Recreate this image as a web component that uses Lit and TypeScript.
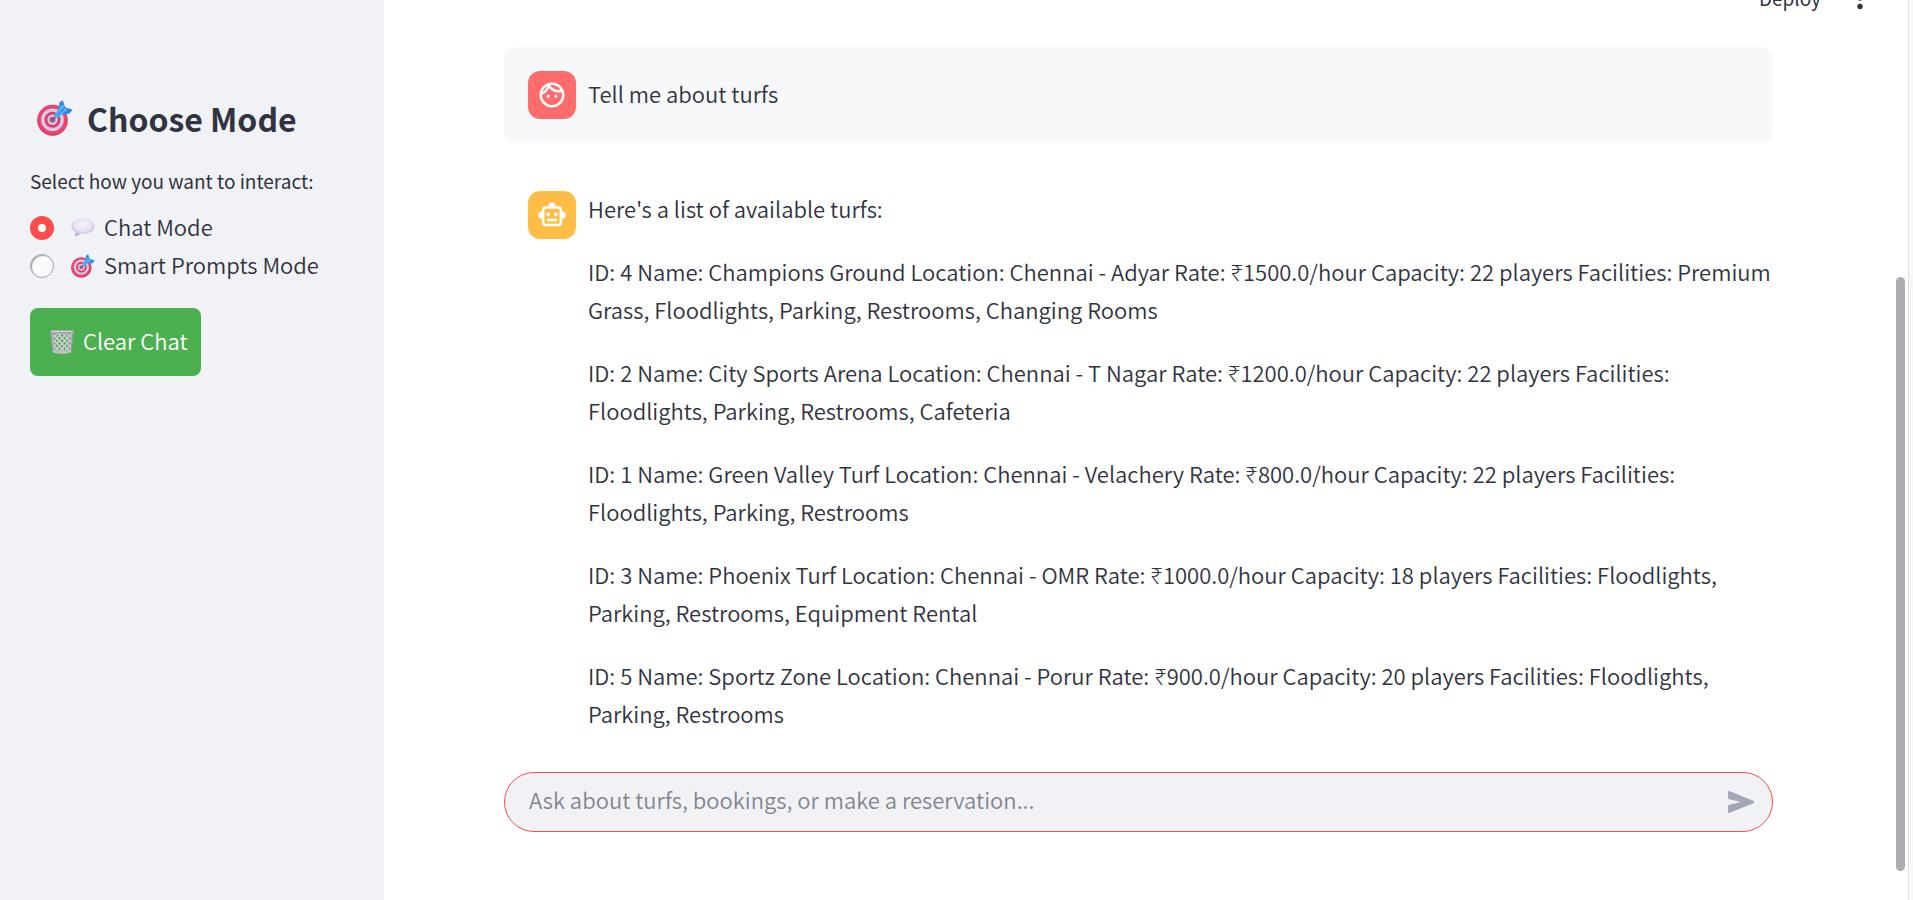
import { LitElement, html, css, svg } from "lit";
import { customElement, state } from "lit/decorators.js";

const turfs = [
  "ID: 4 Name: Champions Ground Location: Chennai - Adyar Rate: ₹1500.0/hour Capacity: 22 players Facilities: Premium Grass, Floodlights, Parking, Restrooms, Changing Rooms",
  "ID: 2 Name: City Sports Arena Location: Chennai - T Nagar Rate: ₹1200.0/hour Capacity: 22 players Facilities: Floodlights, Parking, Restrooms, Cafeteria",
  "ID: 1 Name: Green Valley Turf Location: Chennai - Velachery Rate: ₹800.0/hour Capacity: 22 players Facilities: Floodlights, Parking, Restrooms",
  "ID: 3 Name: Phoenix Turf Location: Chennai - OMR Rate: ₹1000.0/hour Capacity: 18 players Facilities: Floodlights, Parking, Restrooms, Equipment Rental",
  "ID: 5 Name: Sportz Zone Location: Chennai - Porur Rate: ₹900.0/hour Capacity: 20 players Facilities: Floodlights, Parking, Restrooms",
];

const targetArt = svg`
  <circle cx="15.5" cy="20.5" r="15.2" fill="#c92d5c"/>
  <circle cx="15.5" cy="19.8" r="15" fill="#ea4570"/>
  <circle cx="15.5" cy="19.8" r="11.4" fill="#d5c9e3"/>
  <circle cx="15.5" cy="19.8" r="8" fill="#e03a6c"/>
  <circle cx="15.5" cy="19.8" r="5.2" fill="#d8cbe4"/>
  <circle cx="15.5" cy="19.8" r="3" fill="#a45f84"/>
  <path d="M15.2 20.4 20 15" stroke="#6a6579" stroke-width="1.6"/>
  <path d="M21.5 8.500 22.6 2.300 25.8.2 28 7.200 35.6 9.700 32.2 13.800 26 14.600Z" fill="#3287e4"/>
  <path d="M17.2 14.8 24.5 5.2Q26.5 3.6 28 6.8Q31 8 29.8 10.6L20.8 17.8Q18 19 17.2 14.8Z" fill="#4db2f3"/>
  <path d="M20.5 15.2 28 7.2" stroke="#328be4" stroke-width="1.2"/>`;

const bubbleArt = svg`
  <defs><radialGradient id="b" cx=".5" cy=".35" r=".65"><stop offset="0" stop-color="#f7f2fb"/><stop offset=".6" stop-color="#e8dff2"/><stop offset="1" stop-color="#bba9d2"/></radialGradient></defs>
  <path d="M12 2C5.500 2 .5 5.400.5 10Q.5 13.600 4.200 15.900Q5 17.500 3.900 19.300Q4.300 20.600 6 19.800L10.200 17.700C18 18.200 23.500 15.200 23.500 10C23.500 5.300 18.500 2 12 2Z" fill="url(#b)"/>`;

const trashArt = svg`
  <path d="M1 2.500H23L21 22Q12 24.500 3 22Z" fill="#bdb8c4"/>
  <path d="M3.300 4H20.700L19.200 20.500H4.800Z" fill="#58a85d"/>
  <g stroke="#d5d1da" stroke-width="1.300" fill="none">
    <path d="M3.500 5 19 20.500M8 4 20 16M13 4l7.500 7.500M4 10.500l10 10M4.500 16l4.500 4.500M17 4l3 3"/>
    <path d="M20.500 5 5 20.500M16 4 4 16M11 4l-7.500 7.500M20 10.500l-10 10M19.500 16 15 20.500M7 4 4 7"/>
  </g>
  <path d="M1 2.500 3 22M23 2.500 21 22" stroke="#9e99aa" stroke-width="1.200"/>
  <rect x="0" y=".5" width="24" height="3" rx="1.500" fill="#a39ead"/>
  <rect x="1" y=".8" width="22" height="1.200" rx=".6" fill="#dad6e0"/>
  <path d="M3 20.800Q12 22 21 20.800L20.800 22.500Q12 25 3.200 22.500Z" fill="#c4bfcb"/>`;

const faceIcon = svg`<path d="M10.250 13c0 .69-.56 1.250-1.250 1.250S7.750 13.690 7.750 13s.56-1.250 1.250-1.250 1.250.56 1.250 1.250zM15 11.750c-.69 0-1.250.56-1.250 1.250s.56 1.250 1.250 1.250 1.250-.56 1.250-1.250-.56-1.250-1.250-1.250zm7 .25c0 5.520-4.480 10-10 10S2 17.520 2 12 6.480 2 12 2s10 4.480 10 10zM10.660 4.120C12.060 6.440 14.600 8 17.500 8c.46 0 .91-.05 1.340-.12C17.440 5.560 14.900 4 12 4c-.46 0-.91.05-1.340.12zM4.420 9.470c1.710-.97 3.030-2.550 3.660-4.440C6.370 6 5.050 7.580 4.420 9.470zM20 12c0-.78-.12-1.530-.33-2.240-.7.15-1.420.24-2.170.24-3.130 0-5.920-1.440-7.760-3.690C8.690 8.870 6.600 10.880 4 11.860c.01.04 0 .09 0 .14 0 4.410 3.590 8 8 8s8-3.590 8-8z"/>`;

const robotIcon = svg`<path d="M20 9V7c0-1.100-.9-2-2-2h-3c0-1.660-1.340-3-3-3S9 3.340 9 5H6c-1.100 0-2 .9-2 2v2c-1.660 0-3 1.340-3 3s1.340 3 3 3v4c0 1.100.9 2 2 2h12c1.100 0 2-.9 2-2v-4c1.660 0 3-1.340 3-3s-1.340-3-3-3zm-2 10H6V7h12v12zm-9-6c-.83 0-1.500-.67-1.500-1.500S8.170 10 9 10s1.500.67 1.500 1.500S9.830 13 9 13zm7.500-1.500c0 .83-.67 1.500-1.500 1.500s-1.500-.67-1.500-1.500.67-1.500 1.500-1.500 1.500.67 1.500 1.500zM8 15h8v2H8v-2z"/>`;

@customElement("app-root")
export class AppRoot extends LitElement {
  @state() private mode = "chat";

  static styles = css`
    :host {
      display: grid;
      grid-template-columns: 384px minmax(0, 1fr) 20px;
      min-height: 100vh;
      background: #fff;
      color: #31333f;
      font-family: "Noto Sans CJK JP", "Noto Sans", sans-serif;
      font-size: 22px;
      font-weight: 350;
      line-height: 38px;
    }
    * { box-sizing: border-box; }
    svg { display: block; flex: none; }
    h2, p, fieldset { margin: 0; padding: 0; border: 0; }
    button, input { font: inherit; }

    .sidebar { background: #f0f2f6; padding: 95px 30px 0; }
    .title {
      display: flex;
      align-items: center;
      gap: 14px;
      padding-left: 7px;
      font-size: 32px;
      line-height: 46px;
      font-weight: 600;
    }
    .modes { margin-top: 24px; }
    .legend { display: block; padding: 0; font-size: 19px; font-weight: 400; line-height: 32px; margin-bottom: 12px; }
    .mode { display: flex; align-items: center; height: 38px; cursor: pointer; }
    .mode svg { margin: 0 9px 0 17px; }
    .text { padding-bottom: 4px; }
    .radio {
      appearance: none;
      flex: none;
      width: 24px;
      height: 24px;
      margin: 0;
      border: 1px solid #a3a4ac;
      border-radius: 50%;
      background: #fafafc;
      box-shadow: inset 1px 1px 1px #a3a4ac;
    }
    .radio:checked { border: 8px solid #ff4b4b; background: #fff; box-shadow: none; }
    .clear {
      display: flex;
      align-items: center;
      gap: 9px;
      height: 68px;
      margin-top: 23px;
      padding: 0 13px 0 20px;
      border: 0;
      border-radius: 8px;
      background: #4caf50;
      color: #fff;
      cursor: pointer;
    }

    .main { display: flex; flex-direction: column; padding: 0 120px 68px; }
    .topbar {
      display: flex;
      justify-content: flex-end;
      align-items: flex-end;
      gap: 35px;
      height: 13px;
      margin-right: -91px;
      overflow: hidden;
    }
    .bar-button { border: 0; padding: 0; background: none; color: inherit; font-size: 19px; font-weight: 400; line-height: 30px; }
    .chat { display: flex; flex-direction: column; gap: 24px; padding: 34px 0 14px; }
    .message { display: flex; align-items: flex-start; gap: 12px; padding: 24px 0 24px 24px; border-radius: 12px; }
    .user { background: #f7f8fa; align-items: center; }
    .avatar {
      display: grid;
      place-items: center;
      flex: none;
      width: 48px;
      height: 48px;
      border-radius: 12px;
      fill: #fff;
    }
    .avatar-user { background: #ff6c6c; }
    .avatar-bot { background: #ffbd45; }
    .body { display: flex; flex-direction: column; gap: 25px; min-width: 0; margin: -2px 0 2px; }
    .composer {
      display: flex;
      align-items: center;
      height: 60px;
      margin-top: auto;
      padding: 0 17px 0 24px;
      border: 1px solid #ff4b4b;
      border-radius: 30px;
      background: #f0f2f6;
    }
    .prompt { flex: 1; min-width: 0; height: 38px; padding: 0 0 6px; border: 0; outline: 0; background: none; color: inherit; }
    .prompt::placeholder { color: #83858e; opacity: 1; }
    .send { padding: 0; border: 0; background: none; }

    .rail {
      display: grid;
      grid-template-columns: 9px;
      grid-template-rows: 277fr 594fr 29fr;
      padding-left: 3px;
      background: linear-gradient(to right, #fff 15px, #e0e0e1 15px 16px, #f8f8f8 16px);
    }
    .thumb { grid-row: 2; border-radius: 5px; background: #aeadb2; }
  `;

  private target(size: number) {
    return html`<svg width=${size} height=${size} viewBox="0 0 36 36" fill="none" aria-hidden="true">${targetArt}</svg>`;
  }

  render() {
    return html`
      <aside class="sidebar">
        <h2 class="title">${this.target(36)}<span>Choose Mode</span></h2>
        <fieldset class="modes">
          <legend class="legend">Select how you want to interact:</legend>
          <label class="mode">
            <input class="radio" type="radio" name="mode" .checked=${this.mode === "chat"} @change=${() => (this.mode = "chat")} />
            <svg width="24" height="24" viewBox="0 0 24 24" aria-hidden="true">${bubbleArt}</svg>
            <span class="text">Chat Mode</span>
          </label>
          <label class="mode">
            <input class="radio" type="radio" name="mode" .checked=${this.mode === "smart"} @change=${() => (this.mode = "smart")} />
            ${this.target(24)}
            <span class="text">Smart Prompts Mode</span>
          </label>
        </fieldset>
        <button class="clear" type="button">
          <svg width="24" height="24" viewBox="0 0 24 24" aria-hidden="true">${trashArt}</svg>
          <span class="text">Clear Chat</span>
        </button>
      </aside>
      <main class="main">
        <header class="topbar">
          <button class="bar-button" type="button">Deploy</button>
          <button class="bar-button" type="button" aria-label="Menu">
            <svg width="8" height="30" viewBox="0 0 8 30" fill="#31333f" aria-hidden="true">
              <circle cx="4" cy="6.500" r="2.700"/><circle cx="4" cy="15" r="2.700"/><circle cx="4" cy="23.500" r="2.700"/>
            </svg>
          </button>
        </header>
        <section class="chat">
          <article class="message user">
            <div class="avatar avatar-user"><svg width="30" height="30" viewBox="0 0 24 24" aria-hidden="true">${faceIcon}</svg></div>
            <div class="body"><p>Tell me about turfs</p></div>
          </article>
          <article class="message">
            <div class="avatar avatar-bot"><svg width="30" height="30" viewBox="0 0 24 24" aria-hidden="true">${robotIcon}</svg></div>
            <div class="body">
              <p>Here's a list of available turfs:</p>
              ${turfs.map((t) => html`<p>${t}</p>`)}
            </div>
          </article>
        </section>
        <form class="composer" @submit=${(e: Event) => e.preventDefault()}>
          <input class="prompt" type="text" aria-label="Message" placeholder="Ask about turfs, bookings, or make a reservation..." />
          <button class="send" type="submit" aria-label="Send">
            <svg width="28" height="24" viewBox="0 0 28 24" fill="#a3a8b8" aria-hidden="true">
              <path d="M1 2.500Q1 .6 2.800 1.200L26.400 10.800Q28.200 12 26.400 13.200L2.800 22.800Q1 23.400 1 21.500V16.200Q1 15 2.200 14.700L12 12.400Q13 12 12 11.600L2.200 9.300Q1 9 1 7.800Z"/>
            </svg>
          </button>
        </form>
      </main>
      <div class="rail"><div class="thumb"></div></div>
    `;
  }
}
